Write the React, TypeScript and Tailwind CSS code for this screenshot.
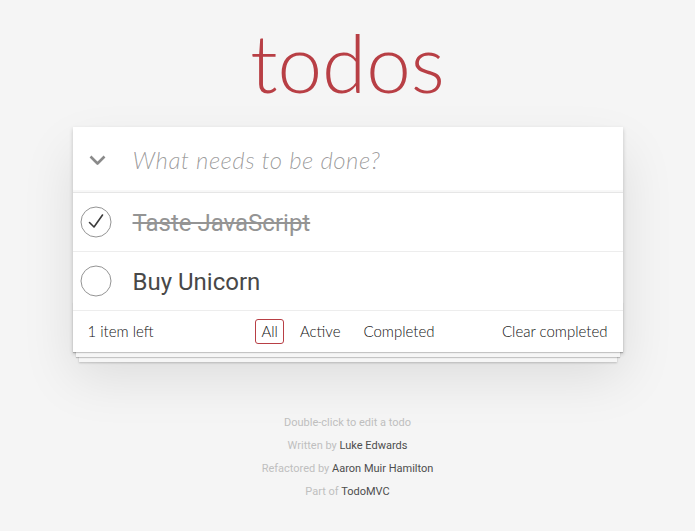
import React, { useState } from 'react';

interface Todo {
  id: number;
  title: string;
  completed: boolean;
}

const Check: React.FC<{ on: boolean; onClick: () => void }> = ({ on, onClick }) => (
  <button onClick={onClick} className="absolute left-[7px] top-1/2 -translate-y-1/2 w-[32px] h-[32px]">
    <svg width="32" height="32" viewBox="0 0 32 32">
      <circle cx="16" cy="16" r="15" fill="none" stroke="#949494" strokeWidth="1" />
      {on && <path d="M9.5 16.5 L14 21 L22.5 9" fill="none" stroke="#3a3a3a" strokeWidth="1.6" strokeLinecap="round" strokeLinejoin="round" />}
    </svg>
  </button>
);

export default function App() {
  const [todos, setTodos] = useState<Todo[]>([
    { id: 1, title: 'Taste JavaScript', completed: true },
    { id: 2, title: 'Buy Unicorn', completed: false },
  ]);
  const [text, setText] = useState('');

  const left = todos.filter(t => !t.completed).length;

  const toggle = (id: number) =>
    setTodos(prev => prev.map(t => (t.id === id ? { ...t, completed: !t.completed } : t)));

  return (
    <div className="min-h-[531px] bg-[#f5f5f5] font-['Roboto','Liberation_Sans',sans-serif] text-[#111] antialiased">
      <h1 className="pt-[12px] h-[127px] text-center text-[80px] leading-[100px] font-[300] text-[#b83f45] font-['Lato','Roboto',sans-serif]">
        todos
      </h1>

      <section className="relative w-[550px] mx-auto bg-white shadow-[0_2px_4px_0_rgba(0,0,0,0.2),0_25px_50px_0_rgba(0,0,0,0.1)]">
        <div className="relative h-[66px] border-b border-[#e6e6e6] shadow-[inset_0_-2px_1px_rgba(0,0,0,0.03)]">
          <svg className="absolute left-[16px] top-[28px]" width="17" height="11" viewBox="0 0 17 11">
            <path d="M1.5 1.5 L8.5 8.5 L15.5 1.5" fill="none" stroke="#8a8a8a" strokeWidth="2.6" strokeLinejoin="round" />
          </svg>
          <input
            value={text}
            onChange={e => setText(e.target.value)}
            placeholder="What needs to be done?"
            className="w-full h-full pl-[60px] pr-4 text-[24px] bg-transparent outline-none font-['Lato','Roboto',sans-serif] placeholder:italic placeholder:font-[300] placeholder:tracking-[0.5px] placeholder:text-[rgba(0,0,0,0.4)]"
          />
        </div>

        <ul>
          {todos.map(t => (
            <li key={t.id} className="relative h-[59px] border-b border-[#ededed] flex items-center">
              <Check on={t.completed} onClick={() => toggle(t.id)} />
              <label
                className={`pl-[60px] pt-[3px] text-[24px] leading-[1.2] ${t.completed ? 'line-through text-[#949494]' : 'text-[#484848]'}`}
              >
                {t.title}
              </label>
            </li>
          ))}
        </ul>

        <footer className="relative h-[41px] px-[15px] flex items-center text-[15px] leading-[19px] text-[#111] font-[300] font-['Lato','Roboto',sans-serif]">
          <div className="pointer-events-none absolute inset-x-0 bottom-0 h-[50px] shadow-[0_1px_1px_rgba(0,0,0,0.2),0_8px_0_-3px_#f6f6f6,0_9px_1px_-3px_rgba(0,0,0,0.2),0_16px_0_-6px_#f6f6f6,0_17px_2px_-6px_rgba(0,0,0,0.2)]" />
          <span className="relative w-[140px]">{left} item{left === 1 ? '' : 's'} left</span>
          <div className="relative flex-1 flex justify-center gap-[9px] ml-[2px]">
            <a className="px-[5px] py-[2px] border border-[#b83f45] rounded-[3px]">All</a>
            <a className="px-[6px] py-[2px] border border-transparent rounded-[3px]">Active</a>
            <a className="px-[6px] py-[2px] border border-transparent rounded-[3px]">Completed</a>
          </div>
          <button
            onClick={() => setTodos(prev => prev.filter(t => !t.completed))}
            className="relative w-[140px] text-right"
          >
            Clear completed
          </button>
        </footer>
      </section>

      <footer className="mt-[65px] text-center text-[11px] text-[#4d4d4d] leading-none">
        <p className="text-[#bfbfbf] mb-[12px]">Double-click to edit a todo</p>
        <p className="text-[#bfbfbf] mb-[12px]">Written by <a className="text-[#4d4d4d]">Luke Edwards</a></p>
        <p className="text-[#bfbfbf] mb-[12px]">Refactored by <a className="text-[#4d4d4d]">Aaron Muir Hamilton</a></p>
        <p className="text-[#bfbfbf]">Part of <a className="text-[#4d4d4d]">TodoMVC</a></p>
      </footer>
    </div>
  );
}
